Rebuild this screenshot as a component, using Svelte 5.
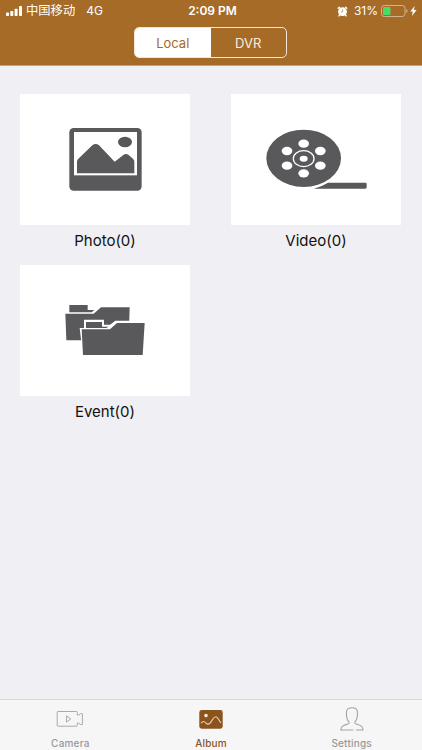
<script>
	let source = 'Local';
	let tab = 'Album';

	const albums = [
		{ name: 'Photo', count: 0 },
		{ name: 'Video', count: 0 },
		{ name: 'Event', count: 0 }
	];

	const tabs = ['Camera', 'Album', 'Settings'];

	// holes around the hub of the film reel
	const holes = [[217, 149], [267, 171], [267, 215], [217, 238], [167, 215], [167, 171]];
</script>

<div class="app">
	<header>
		<div class="status">
			<div class="left">
				<svg class="signal" width="17" height="10" viewBox="0 0 17 10" fill="#fff">
					<rect x="0" y="6.5" width="3" height="3.5" rx=".8" />
					<rect x="4.3" y="5" width="3" height="5" rx=".8" />
					<rect x="8.6" y="2.8" width="3" height="7.2" rx=".8" />
					<rect x="13" y="0" width="3" height="10" rx=".8" />
				</svg>
				<span class="carrier">中国移动</span>
				<span class="network">4G</span>
			</div>
			<div class="time">2:09 PM</div>
			<div class="right">
				<svg class="alarm" width="11" height="11" viewBox="0 0 11 11">
					<circle cx="5.5" cy="5.6" r="4.4" fill="#fff" />
					<path d="M1.2 2.2L2.4 1.2M9.8 2.2L8.600 1.200M2.500 9l-.6.9M8.500 9l.6.9" stroke="#fff" stroke-width="1.400" stroke-linecap="round" />
					<path d="M5.700 3.400v2.500H3.800" fill="none" stroke="#b98b56" stroke-width=".8" />
				</svg>
				<span class="percent">31%</span>
				<svg class="battery" width="27" height="12" viewBox="0 0 27 12">
					<rect x=".5" y=".5" width="23.5" height="11" rx="2.8" fill="none" stroke="#d3b48f" />
					<rect x="2" y="2" width="7.5" height="8" rx="1" fill="#4cd964" />
					<path d="M25.2 4v4q1.3-.6 1.3-2t-1.3-2" fill="#d3b48f" />
				</svg>
				<svg class="bolt" width="7" height="10" viewBox="0 0 7 10">
					<path d="M4.6 0L.3 5.6h2.5L1.9 10 6.6 4.1H4z" fill="#fff" />
				</svg>
			</div>
		</div>
		<div class="segments">
			{#each ['Local', 'DVR'] as item}
				<button class:active={source === item} on:click={() => (source = item)}>{item}</button>
			{/each}
		</div>
	</header>

	<main>
		{#each albums as album}
			<div class="album">
				<div class="cover">
					<svg width="170" height="131" viewBox="-1 0 510 393" fill="#59595b">
						{#if album.name === 'Photo'}
							<rect x="147" y="102" width="217" height="188" rx="13" />
							<rect x="161" y="114" width="189" height="130" fill="#fff" />
							<ellipse cx="314" cy="144" rx="21" ry="16" />
							<path d="M170 203q0-5 4-9l42-40q10-8 20 0l47 49 26-20q8-6 16 0l13 11q4 4 4 9v35H170z" />
						{:else if album.name === 'Video'}
							<path d="M247 284q24-6 43-18h112q4 0 4 4v10q0 4-4 4z" />
							<ellipse cx="217" cy="193" rx="112" ry="86" />
							{#each holes as [x, y]}
								<ellipse cx={x} cy={y} rx="16" ry="12.5" fill="#fff" />
							{/each}
							<ellipse cx="217" cy="194" rx="31" ry="24" fill="none" stroke="#fff" stroke-width="4" />
							<ellipse cx="217" cy="194" rx="12" ry="9" fill="#fff" />
						{:else}
							<path d="M147 142v-22h55v15h20l-8 7z" />
							<path d="M135 146h85l22-19h86l-3 99H138z" />
							<path d="M178 189h13v-25h60v15h18l16-12h45v60l-147 5z" fill="#fff" />
							<path d="M197 189v-18h48v14h19l-6 4z" />
							<path d="M184 193h85l21-19h83l-6 96H188z" />
						{/if}
					</svg>
				</div>
				<div class="label">{album.name}({album.count})</div>
			</div>
		{/each}
	</main>

	<nav>
		{#each tabs as item}
			<button class:active={tab === item} on:click={() => (tab = item)}>
				{#if item === 'Camera'}
					<svg width="28" height="26" viewBox="0 0 28 26" fill="none" stroke="#aaa">
						<path d="M2 5.5h18.5q.8 0 .8.8v2.8h1.5l1.6-1.4h2v10.8h-2l-1.6-1.4h-1.5v2.2q0 .9-.8.9H2q-.8 0-.8-.9V6.3q0-.8.8-.8z" />
						<path d="M10.5 9.8v6.3l4.2-3.1z" />
					</svg>
				{:else if item === 'Album'}
					<svg width="28" height="26" viewBox="0 0 28 26">
						<rect x="2.3" y="4" width="23.4" height="18.7" rx="2.4" fill="#8b541f" />
						<circle cx="9" cy="9.6" r="1.8" fill="#f5e6d3" />
						<path d="M4 17.3c1.8-2.7 3.3-2 4.7-.5 1.5 1.8 3.4 1.8 5-.4 2-2.8 2.8-5.6 5-5.6 2.4 0 3.1 4.2 5.3 6" fill="none" stroke="#e8cfae" stroke-width="1.1" />
					</svg>
				{:else}
					<svg width="28" height="26" viewBox="0 0 28 26" fill="none" stroke="#a3a3a3" stroke-width="1.1">
						<path d="M10.7 15.5C8.5 13.5 8.4 10 8.4 6.7 8.4 3 10.6 1.8 14 1.8s5.5 1.2 5.5 4.900c0 3.300 0 6.800-2.300 8.800-.8 1-.4 1.800.8 2.400 3.800 1.500 7 1.700 7 6.100H18M15.500 24H2.900c0-4.400 3.300-4.600 7-6.100 1.200-.6 1.600-1.400.8-2.400" />
					</svg>
				{/if}
				<span>{item}</span>
			</button>
		{/each}
	</nav>
</div>

<style>
	:global(body) {
		margin: 0;
	}

	.app {
		display: flex;
		flex-direction: column;
		height: 750px;
		background: #efeff4;
		font-family: Inter, "Noto Sans CJK SC", sans-serif;
	}

	button {
		padding: 0;
		border: 0;
		background: none;
		font-family: inherit;
	}

	header {
		box-sizing: border-box;
		height: 66px;
		background: #a56b27;
		border-bottom: 1px solid #c5a17b;
		color: #fff;
	}

	.status {
		display: grid;
		grid-template-columns: 1fr auto 1fr;
		height: 22px;
		padding: 0 5px 0 6px;
		align-items: center;
		font-size: 12px;
		line-height: 22px;
		white-space: nowrap;
	}

	.left,
	.right {
		display: flex;
		align-items: center;
	}

	.right {
		justify-content: flex-end;
	}

	.carrier {
		margin-left: 3px;
		font-size: 12.3px;
	}

	.network {
		margin-left: 11px;
	}

	.time {
		padding-left: 2px;
		font-weight: 600;
	}

	.percent {
		margin: 0 3px 0 6px;
	}

	.bolt {
		margin-left: 2px;
	}

	.segments {
		box-sizing: border-box;
		display: flex;
		width: 153px;
		height: 31px;
		margin: 5px 0 0 134px;
		border: 1px solid #f4e6d4;
		border-radius: 5px;
		overflow: hidden;
	}

	.segments button {
		flex: 1;
		color: #f8eee2;
		font-size: 13px;
	}

	.segments .active {
		background: #fff;
		color: #a56b27;
	}

	main {
		flex: 1;
		display: grid;
		grid-template-columns: 170px 170px;
		grid-auto-rows: 171px;
		column-gap: 41px;
		padding: 28px 20px 0;
	}

	.cover {
		height: 131px;
		background: #fff;
	}

	.cover svg {
		display: block;
	}

	.label {
		line-height: 31px;
		font-size: 15px;
		text-align: center;
		color: #111;
	}

	nav {
		box-sizing: border-box;
		display: flex;
		height: 51px;
		background: #f6f6f7;
		border-top: 1px solid #d8d7dd;
	}

	nav button {
		flex: 1;
		display: flex;
		flex-direction: column;
		align-items: center;
		padding-top: 6px;
		color: #999;
		font-size: 10px;
		font-weight: 500;
		letter-spacing: 0.2px;
	}

	nav span {
		margin-top: 5px;
		line-height: 12px;
	}

	nav .active {
		color: #8b541f;
	}
</style>
